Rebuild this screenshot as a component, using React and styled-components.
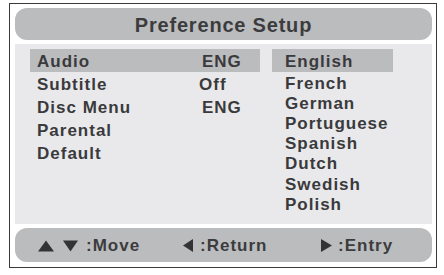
import styled, { createGlobalStyle } from "styled-components";

const GlobalStyle = createGlobalStyle`
    body {
        margin: 0;
        background: #ffffff;
        font-family: "Liberation Sans", Arial, sans-serif;
    }
`;

const Frame = styled.div`
    box-sizing: border-box;
    width: 428px;
    height: 265px;
    margin: 3px 0 0 9px;
    padding: 4px 4px 5px 5px;
    border: 1px solid #3a3a3a;
    background: #ffffff;
    display: flex;
    flex-direction: column;
    gap: 4px;
`;

const Bar = styled.div`
    box-sizing: border-box;
    height: ${props => props.h}px;
    border-radius: 12px;
    background: #bbbcbe;
    color: #3c3c3e;
    font-weight: bold;
    display: flex;
    align-items: center;
`;

const Title = styled(Bar)`
    justify-content: center;
    padding-top: 2px;
    font-size: 20px;
    letter-spacing: 0.8px;
`;

const Panel = styled.div`
    height: 180px;
    background: #e9e9eb;
    padding: 5px 0 0 15px;
    box-sizing: border-box;
    display: grid;
    grid-template-columns: 230px 121px;
    column-gap: 12px;
    align-items: start;
    color: #3a3a3c;
    font-weight: bold;
    font-size: 17px;
    letter-spacing: 1px;
`;

const Column = styled.div`
    display: flex;
    flex-direction: column;
`;

const MenuRow = styled.div`
    box-sizing: border-box;
    height: 23px;
    display: flex;
    align-items: center;
    padding: 3px 0 0 7px;
    background: ${props => (props.active ? "#bbbcbe" : "transparent")};
`;

const Label = styled.span`
    width: 165px;
`;

const Value = styled.span`
    margin-left: ${props => props.shift || 0}px;
`;

const Option = styled.div`
    box-sizing: border-box;
    height: ${props => (props.active ? 23 : 20.2)}px;
    display: flex;
    align-items: center;
    padding: 3px 0 0 13px;
    background: ${props => (props.active ? "#bbbcbe" : "transparent")};
`;

const Footer = styled(Bar)`
    display: grid;
    grid-template-columns: 145px 138px auto;
    padding: 1px 0 0 23px;
    font-size: 17px;
    letter-spacing: 1px;
`;

const Hint = styled.div`
    display: flex;
    align-items: center;
`;

const Key = styled.svg`
    display: block;
    margin-right: ${props => props.gap}px;
    fill: #333335;
`;

const Up = ({ gap }) => (
    <Key gap={gap} width="16" height="12" viewBox="0 0 16 12">
        <polygon points="8,0.5 16,11.5 0,11.5" />
    </Key>
);

const Down = ({ gap }) => (
    <Key gap={gap} width="15" height="12" viewBox="0 0 15 12">
        <polygon points="0,0.5 15,0.5 7.5,11.5" />
    </Key>
);

const Left = ({ gap }) => (
    <Key gap={gap} width="10" height="13" viewBox="0 0 10 13">
        <polygon points="10,0 10,13 0,6.5" />
    </Key>
);

const Right = ({ gap }) => (
    <Key gap={gap} width="11" height="13" viewBox="0 0 11 13">
        <polygon points="0,0 11,6.5 0,13" />
    </Key>
);

const menu = [
    { label: "Audio", value: "ENG", active: true },
    { label: "Subtitle", value: "Off", shift: -3 },
    { label: "Disc Menu", value: "ENG" },
    { label: "Parental" },
    { label: "Default" },
];

const languages = ["English", "French", "German", "Portuguese", "Spanish", "Dutch", "Swedish", "Polish"];

export default function App() {
    return (
        <>
            <GlobalStyle />
            <Frame>
                <Title h={32}>Preference Setup</Title>
                <Panel>
                    <Column>
                        {menu.map(item => (
                            <MenuRow key={item.label} active={item.active}>
                                <Label>{item.label}</Label>
                                <Value shift={item.shift}>{item.value}</Value>
                            </MenuRow>
                        ))}
                    </Column>
                    <Column>
                        {languages.map((lang, i) => (
                            <Option key={lang} active={i === 0}>{lang}</Option>
                        ))}
                    </Column>
                </Panel>
                <Footer h={34}>
                    <Hint>
                        <Up gap={9} />
                        <Down gap={8} />
                        :Move
                    </Hint>
                    <Hint>
                        <Left gap={7} />
                        :Return
                    </Hint>
                    <Hint>
                        <Right gap={6} />
                        :Entry
                    </Hint>
                </Footer>
            </Frame>
        </>
    );
}
